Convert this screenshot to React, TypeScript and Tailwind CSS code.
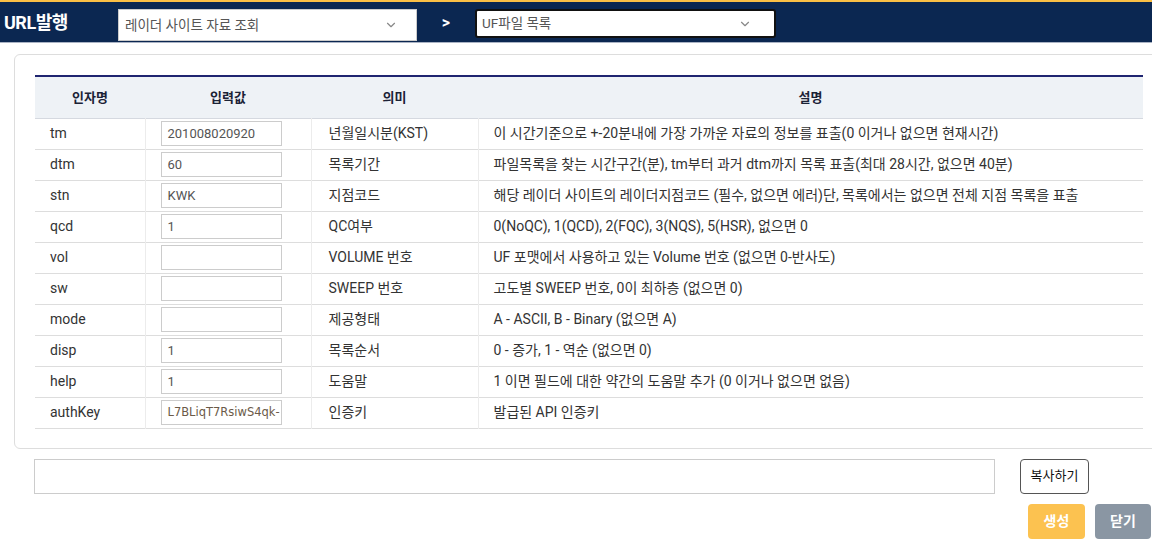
import React from "react";
import { ChevronDown } from "lucide-react";

type Row = { name: string; value: string | null; meaning: string; desc: string };

const rows: Row[] = [
  { name: "tm", value: "201008020920", meaning: "년월일시분(KST)", desc: "이 시간기준으로 +-20분내에 가장 가까운 자료의 정보를 표출(0 이거나 없으면 현재시간)" },
  { name: "dtm", value: "60", meaning: "목록기간", desc: "파일목록을 찾는 시간구간(분), tm부터 과거 dtm까지 목록 표출(최대 28시간, 없으면 40분)" },
  { name: "stn", value: "KWK", meaning: "지점코드", desc: "해당 레이더 사이트의 레이더지점코드 (필수, 없으면 에러)단, 목록에서는 없으면 전체 지점 목록을 표출" },
  { name: "qcd", value: "1", meaning: "QC여부", desc: "0(NoQC), 1(QCD), 2(FQC), 3(NQS), 5(HSR), 없으면 0" },
  { name: "vol", value: "", meaning: "VOLUME 번호", desc: "UF 포맷에서 사용하고 있는 Volume 번호 (없으면 0-반사도)" },
  { name: "sw", value: "", meaning: "SWEEP 번호", desc: "고도별 SWEEP 번호, 0이 최하층 (없으면 0)" },
  { name: "mode", value: "", meaning: "제공형태", desc: "A - ASCII, B - Binary (없으면 A)" },
  { name: "disp", value: "1", meaning: "목록순서", desc: "0 - 증가, 1 - 역순 (없으면 0)" },
  { name: "help", value: "1", meaning: "도움말", desc: "1 이면 필드에 대한 약간의 도움말 추가 (0 이거나 없으면 없음)" },
  { name: "authKey", value: "L7BLiqT7RsiwS4qk-", meaning: "인증키", desc: "발급된 API 인증키" },
];

const font = { fontFamily: '"Roboto", "Noto Sans CJK KR", sans-serif' };

export default function App() {
  return (
    <div className="w-[1152px] h-[543px] overflow-hidden bg-white text-[#333]" style={font}>
      {/* top bar */}
      <div className="h-[2px] bg-[#fbbf45]" />
      <div className="h-[41px] bg-[#0b2751] border-b border-[#aab3c4] flex items-start">
        <div className="ml-[4px] mt-[7px] text-white text-[18px] font-bold tracking-[-0.5px] w-[114px]">URL발행</div>
        <div className="mt-[7px] w-[299px] h-[32px] bg-white border border-[#ccc] flex items-center justify-between pl-[6px] pr-[18px]">
          <span className="text-[13.5px] text-[#555]">레이더 사이트 자료 조회</span>
          <ChevronDown className="w-[14px] h-[14px] text-[#888]" strokeWidth={2} />
        </div>
        <div className="w-[58px] mt-[9px] text-center text-white font-bold text-[16px]">&gt;</div>
        <div className="mt-[7px] w-[301px] h-[29px] bg-white border-2 border-[#111] rounded-[3px] flex items-center justify-between pl-[5px] pr-[22px]">
          <span className="text-[13.5px] text-[#555]">UF파일 목록</span>
          <ChevronDown className="w-[14px] h-[14px] text-[#888]" strokeWidth={2} />
        </div>
      </div>

      {/* parameter card */}
      <div className="ml-[14px] mt-[11px] w-[1160px] border border-[#ddd] rounded-[6px] pt-[20px] pb-[19px] pl-[20px]">
        <table className="w-[1108px] border-collapse text-[14px]">
          <thead>
            <tr className="bg-[#eef2f6] border-t-2 border-[#1f2470] border-b border-b-[#d5d9e0] h-[42px] text-[13px] font-bold text-[#1b2236]">
              <th className="w-[110px] font-bold">인자명</th>
              <th className="w-[166px] font-bold">입력값</th>
              <th className="w-[167px] font-bold">의미</th>
              <th className="font-bold">설명</th>
            </tr>
          </thead>
          <tbody>
            {rows.map((r) => (
              <tr key={r.name} className="h-[31px] border-b border-[#ddd]">
                <td className="pl-[15px] border-r border-[#ececec]">{r.name}</td>
                <td className="pl-[15px] border-r border-[#ececec]">
                  <div className="w-[121px] h-[25px] border border-[#ccc] flex items-center px-[6px] overflow-hidden whitespace-nowrap">
                    <span
                      className={r.name === "authKey" ? "text-[12px] text-[#6b5a48]" : "text-[13px] text-[#555]"}
                      style={r.name === "authKey" ? { fontFamily: '"DejaVu Sans", sans-serif', fontSize: "11.5px" } : undefined}
                    >
                      {r.value}
                    </span>
                  </div>
                </td>
                <td className="pl-[17px] border-r border-[#ececec]">{r.meaning}</td>
                <td className="pl-[15px]">{r.desc}</td>
              </tr>
            ))}
          </tbody>
        </table>
      </div>

      {/* result url & actions */}
      <div className="flex items-start mt-[10px] ml-[34px]">
        <div className="w-[961px] h-[35px] border border-[#ccc]" />
        <button className="ml-[25px] w-[69px] h-[35px] border border-[#555] rounded-[4px] bg-white text-[13px] text-[#111]">
          복사하기
        </button>
      </div>
      <div className="flex justify-end gap-[10px] mt-[10px] pr-[1px]">
        <button className="w-[57px] h-[35px] rounded-[4px] bg-[#fcc250] text-white text-[14px] font-bold">생성</button>
        <button className="w-[56px] h-[35px] rounded-[4px] bg-[#8a96a3] text-white text-[14px] font-bold">닫기</button>
      </div>
    </div>
  );
}
